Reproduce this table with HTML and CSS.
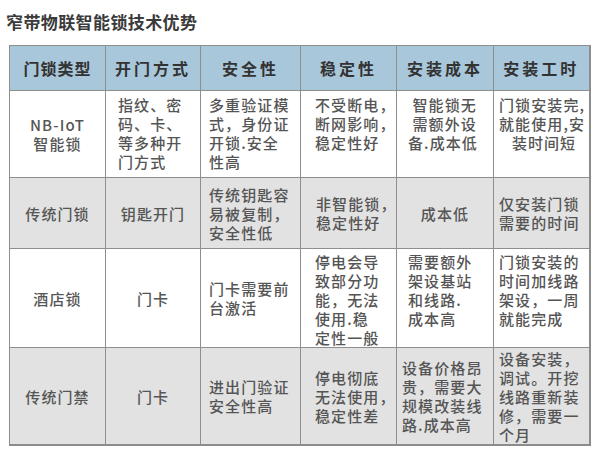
FILE: index.html
```html
<!DOCTYPE html>
<html lang="zh">
<head>
<meta charset="utf-8">
<title>窄带物联智能锁技术优势</title>
<link rel="stylesheet" href="styles.css">
</head>
<body>
<h1 class="title">窄带物联智能锁技术优势</h1>
<table class="grid">
  <colgroup>
    <col class="c1"><col class="c2"><col class="c3"><col class="c4"><col class="c5"><col class="c6">
  </colgroup>
  <thead>
    <tr class="head">
      <th class="h-tight">门锁类型</th>
      <th>开门方式</th>
      <th>安全性</th>
      <th>稳定性</th>
      <th>安装成本</th>
      <th>安装工时</th>
    </tr>
  </thead>
  <tbody>
    <tr class="r1">
      <td class="center mid">NB-IoT<br>智能锁</td>
      <td class="top p2">指纹、密<br>码、卡、<br>等多种开<br>门方式</td>
      <td class="top p3">多重验证模<br>式，身份证<br>开锁.安全<br>性高</td>
      <td class="top p4">不受断电，<br>断网影响，<br>稳定性好</td>
      <td class="top p5">&nbsp;智能锁无<br>&nbsp;需额外设<br>备.成本低</td>
      <td class="top p6 tight">门锁安装完,<br>就能使用,安<br><span class="indent">装时间短</span></td>
    </tr>
    <tr class="r2 shade">
      <td class="center mid">传统门锁</td>
      <td class="center mid">钥匙开门</td>
      <td class="mid p3">传统钥匙容<br>易被复制，<br>安全性低</td>
      <td class="mid p4b">非智能锁，<br>稳定性好</td>
      <td class="center mid">成本低</td>
      <td class="mid p6">仅安装门锁<br>需要的时间</td>
    </tr>
    <tr class="r3">
      <td class="center mid">酒店锁</td>
      <td class="center mid">门卡</td>
      <td class="mid p3">门卡需要前<br>台激活</td>
      <td class="top p4 t3">停电会导<br>致部分功<br>能，无法<br>使用.稳<br>定性一般</td>
      <td class="top p5 t3">需要额外<br>架设基站<br>和线路.<br>成本高</td>
      <td class="top p6 t3">门锁安装的<br>时间加线路<br>架设，一周<br>就能完成</td>
    </tr>
    <tr class="r4 shade">
      <td class="center mid">传统门禁</td>
      <td class="center mid">门卡</td>
      <td class="mid p3">进出门验证<br>安全性高</td>
      <td class="mid p4">停电彻底<br>无法使用，<br>稳定性差</td>
      <td class="mid p5b">设备价格昂<br>贵，需要大<br>规模改装线<br>路.成本高</td>
      <td class="mid p6">设备安装，<br>调试。开挖<br>线路重新装<br>修，需要一<br>个月</td>
    </tr>
  </tbody>
</table>
</body>
</html>
```

FILE: styles.css
```css
html, body {
  margin: 0;
  padding: 0;
  background: #ffffff;
}

body {
  width: 600px;
  height: 459px;
  overflow: hidden;
  font-family: "Noto Sans CJK SC", "Noto Sans", sans-serif;
}

.title {
  margin: 0;
  padding: 10px 0 0 6px;
  font-size: 17px;
  line-height: 24px;
  font-weight: 700;
  color: #3a3a3a;
  letter-spacing: 0.4px;
}

.grid {
  margin: 11px 0 0 9px;
  border-collapse: collapse;
  table-layout: fixed;
  width: 580px;
  border-right: 2px solid #8c8c8c;
  border-bottom: 2px solid #8c8c8c;
}

.c1 { width: 96px; }
.c2 { width: 95px; }
.c3 { width: 100px; }
.c4 { width: 96px; }
.c5 { width: 97px; }
.c6 { width: 96px; }

.grid th,
.grid td {
  border: 1px solid #8e8e8e;
  padding: 0;
  white-space: nowrap;
  overflow: hidden;
}

.grid th {
  background: #a9c7da;
  height: 44px;
  font-size: 16px;
  font-weight: 700;
  color: #333333;
  letter-spacing: 3px;
  text-align: center;
  vertical-align: middle;
}

.grid th.h-tight {
  letter-spacing: 1px;
}

.grid td {
  font-size: 15px;
  line-height: 19px;
  font-weight: 500;
  color: #555555;
  letter-spacing: 1.1px;
  text-align: left;
}

.r1 td { height: 82px; }
.r2 td { height: 70px; }
.r3 td { height: 95px; }
.r4 td { height: 96px; }

.shade td {
  background: #e2e2e2;
}

.center { text-align: center !important; }
.mid { vertical-align: middle; }
.top { vertical-align: top; padding-top: 4px !important; }
.t3 { padding-top: 3px !important; }

.p2 { padding-left: 12px !important; }
.p3 { padding-left: 8px !important; }
.p4 { padding-left: 14px !important; }
.p4b { padding-left: 15px !important; }
.p5 { padding-left: 11px !important; }
.p5b { padding-left: 5px !important; }
.p6 { padding-left: 5px !important; }

.tight {
  letter-spacing: 0;
}

.indent {
  padding-left: 13px;
  letter-spacing: 1px;
}
```
